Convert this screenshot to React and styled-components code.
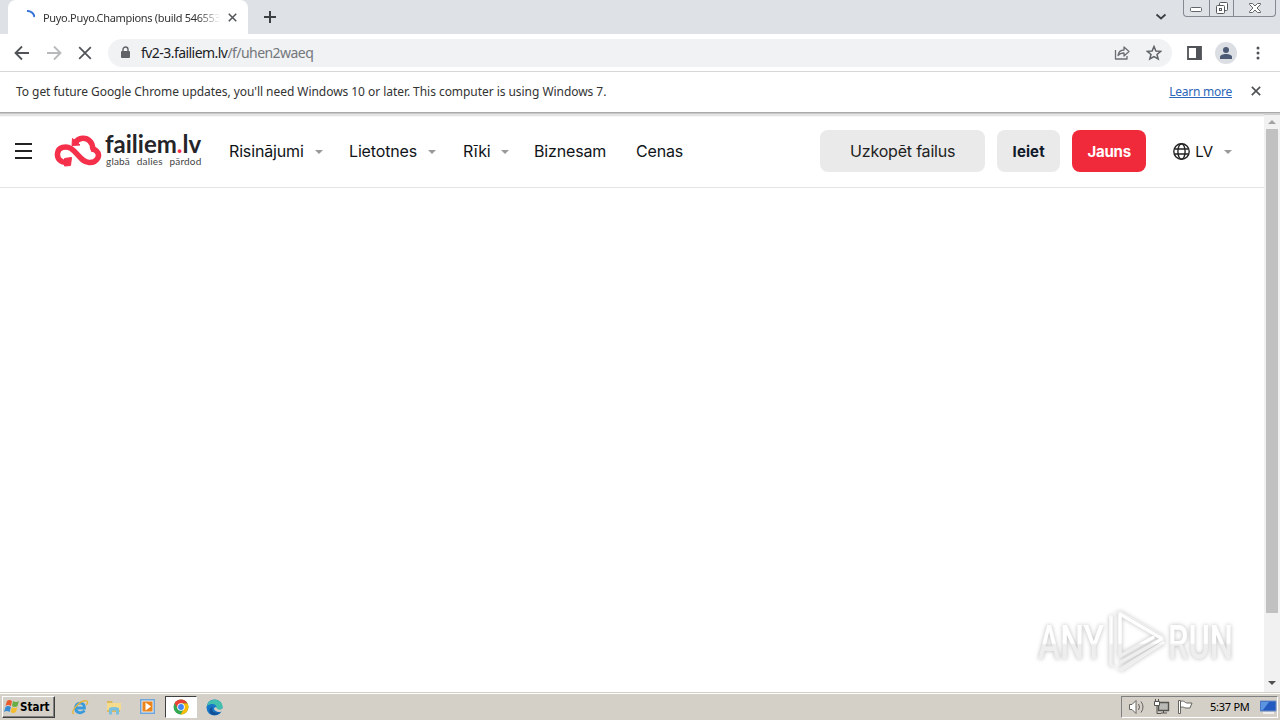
import React from 'react'
import styled, { createGlobalStyle } from 'styled-components'

const GlobalStyle = createGlobalStyle`
  * { box-sizing: border-box; }
  body { margin: 0; overflow: hidden; }
  svg { display: block; flex: none; }
`

const Screen = styled.div`
  position: relative;
  width: 1280px;
  height: 720px;
  display: flex;
  flex-direction: column;
  overflow: hidden;
  background: #fff;
  font-family: 'Noto Sans', sans-serif;
`

const Label = styled.span`
  flex: none;
  white-space: nowrap;
  color: ${props => props.$color || '#333'};
  font-size: ${props => props.$size || 12}px;
  font-weight: ${props => props.$weight || 400};
  letter-spacing: ${props => props.$spacing || 0}px;
`

const Spacer = styled.div`
  flex: 1;
`

const TabStrip = styled.div`
  height: 34px;
  flex: none;
  display: flex;
  padding-left: 8px;
  background: #dee1e6;
`

const Tab = styled.div`
  width: 240px;
  height: 34px;
  display: flex;
  align-items: center;
  padding: 0 11px;
  border-radius: 8px 8px 0 0;
  background: #fff;
`

const TabTitle = styled.div`
  width: 178px;
  margin-left: 8px;
  line-height: 18px;
  mask-image: linear-gradient(90deg, #000 155px, transparent 177px);
`

const NewTab = styled.div`
  padding: 9px 0 0 14px;
`

const TabSearch = styled.div`
  padding: 13px 16px 0 0;
`

const WindowButtons = styled.div`
  display: flex;
  width: 93px;
  height: 17px;
  margin-right: 4px;
  border: 1px solid #868991;
  border-top: 0;
  border-radius: 0 0 4px 4px;
`

const WindowButton = styled.div`
  width: ${props => props.$width}px;
  height: 16px;
  display: flex;
  align-items: center;
  justify-content: center;
  border-left: ${props => (props.$first ? 0 : '1px solid #868991')};
`

const Toolbar = styled.div`
  height: 38px;
  flex: none;
  display: flex;
  align-items: center;
  padding: 0 14px;
  border-bottom: 1px solid #d6d7d9;
`

const NavIcons = styled.div`
  display: flex;
  align-items: center;
  gap: 16px;
`

const Omnibox = styled.div`
  width: 1064px;
  height: 28px;
  display: flex;
  align-items: center;
  margin-left: 16px;
  padding: 0 10px 0 12px;
  border-radius: 14px;
  background: #f0f2f4;
`

const Url = styled.div`
  margin-left: 10px;
  line-height: 20px;
`

const Avatar = styled.div`
  width: 22px;
  height: 22px;
  margin: 0 19px 0 13px;
  display: flex;
  align-items: center;
  justify-content: center;
  border-radius: 50%;
  background: #dbdee3;
`

const InfoBar = styled.div`
  height: 40px;
  flex: none;
  display: flex;
  align-items: center;
  padding: 0 19px 2px 16px;
`

const Link = styled(Label)`
  margin-right: 19px;
  text-decoration: underline;
  text-underline-offset: 1px;
`

const Viewport = styled.div`
  height: 580px;
  flex: none;
  display: flex;
`

const Page = styled.div`
  width: 1264px;
  box-shadow: inset 0 1px #a9a9a9, inset 0 2px #c8c8c8, inset 0 4px #e4e4e4, inset 0 5px #f6f6f6;
`

const SiteHeader = styled.div`
  height: 76px;
  display: flex;
  align-items: center;
  padding: 3px 32px 0 15px;
  border-bottom: 1px solid #e3e3e3;
`

const Brand = styled.div`
  display: flex;
  margin-left: 21px;
  width: 175px;
`

const BrandText = styled.div`
  display: flex;
  flex-direction: column;
  margin-left: 3px;
  font-family: Lato, sans-serif;
`

const BrandName = styled(Label)`
  height: 21px;
  line-height: 20px;
`

const BrandDot = styled.span`
  color: #f5304b;
`

const Tagline = styled(Label)`
  height: 12px;
  margin-left: 1px;
  line-height: 12px;
  word-spacing: 4px;
`

const Menu = styled.div`
  display: flex;
  font-family: Inter, sans-serif;
`

const MenuItem = styled.div`
  width: ${props => props.$width}px;
  display: flex;
  align-items: center;
`

const Caret = styled.i`
  width: 0;
  height: 0;
  margin: 1px 0 0 ${props => props.$gap || 10}px;
  border: 4px solid transparent;
  border-top-color: #999;
  border-bottom-width: 0;
`

const Button = styled.div`
  width: ${props => props.$width}px;
  height: 42px;
  margin-right: 12px;
  display: flex;
  align-items: center;
  justify-content: center;
  border-radius: 8px;
  background: ${props => (props.$primary ? '#f02a3a' : '#eaeaea')};
  font-family: Inter, sans-serif;
`

const Language = styled.div`
  display: flex;
  align-items: center;
  gap: 5px;
  margin-left: 15px;
  font-family: Inter, sans-serif;
`

const ScrollBar = styled.div`
  width: 16px;
  display: flex;
  flex-direction: column;
  align-items: center;
  background: #f1f1f1;
  box-shadow: inset 0 1px #a9a9a9, inset 0 3px #cecece;
`

const ScrollArrow = styled.i`
  margin: ${props => (props.$up ? '8px 0 5px' : '68px 0 0')};
  border: 4px solid transparent;
  border-top: ${props => (props.$up ? 0 : '4px solid #505050')};
  border-bottom: ${props => (props.$up ? '4px solid #a3a3a3' : 0)};
`

const Thumb = styled.div`
  width: 12px;
  height: 484px;
  background: #c1c1c1;
`

const Taskbar = styled.div`
  height: 28px;
  flex: none;
  display: flex;
  align-items: center;
  padding: 1px 2px 0;
  border-top: 1px solid #d4d0c8;
  background: #d4d0c8;
  box-shadow: inset 0 1px #fff;
`

const StartButton = styled.div`
  width: 53px;
  height: 22px;
  display: flex;
  align-items: center;
  padding-left: 1px;
  border: 1px solid;
  border-color: #fff #404040 #404040 #fff;
  box-shadow: inset -1px -1px #808080;
  font-family: 'DejaVu Sans Condensed', 'DejaVu Sans', sans-serif;
`

const TaskItem = styled.div`
  width: ${props => (props.$active ? 32 : 34)}px;
  height: 22px;
  display: flex;
  align-items: center;
  justify-content: center;
  border: ${props => (props.$active ? '1px solid' : 0)};
  border-color: #404040 #fff #fff #404040;
  background: ${props => (props.$active ? '#fff' : 'transparent')};
`

const TaskItems = styled.div`
  display: flex;
  margin-left: 8px;
`

const Tray = styled.div`
  width: 157px;
  height: 22px;
  display: flex;
  align-items: center;
  padding-left: 6px;
  gap: 7px;
  border: 1px solid;
  border-color: #808080 #fff #fff #808080;
`

const Clock = styled(Label)`
  width: 43px;
  margin-left: 9px;
  line-height: 16px;
`

const Watermark = styled.div`
  position: absolute;
  left: 1034px;
  top: 605px;
`

const Cross = ({ size, color = '#505357', width = 2 }) => (
  <svg width={size} height={size} viewBox="0 0 12 12" stroke={color} strokeWidth={width}>
    <path d="M1 1 11 11M11 1 1 11" />
  </svg>
)

const Arrow = ({ color, flip }) => (
  <svg width="16" height="16" viewBox="0 0 16 16" fill="none" stroke={color} strokeWidth="1.8">
    <path d={flip ? 'M1 8H14M8 1.500 14.500 8 8 14.500' : 'M15 8H2M8 1.500 1.500 8 8 14.500'} />
  </svg>
)

const WindowsControls = () => (
  <WindowButtons>
    <WindowButton $width={25} $first>
      <svg width="14" height="6" fill="#fff" stroke="#62656b" style={{ marginTop: 4 }}><rect x="1.5" y=".5" width="11" height="4" rx="1" /></svg>
    </WindowButton>
    <WindowButton $width={25}>
      <svg width="14" height="14" fill="#fff" stroke="#55585e">
        <rect x="4.5" y="1.5" width="8" height="8" rx="1" />
        <rect x="1.5" y="4.5" width="8" height="8" rx="1" />
        <rect x="4.5" y="7.5" width="2" height="2" />
      </svg>
    </WindowButton>
    <WindowButton $width={42}>
      <svg width="14" height="12" fill="#fff" stroke="#62656b">
        <path d="M1.500 1.500H4.500L7 4 9.500 1.500H12.500V2.500L9 6 12.500 9.500V10.500H9.500L7 8 4.500 10.500H1.500V9.500L5 6 1.500 2.500Z" />
      </svg>
    </WindowButton>
  </WindowButtons>
)

const CloudLogo = () => (
  <svg width="48" height="34" viewBox="0 0 48 34" fill="none" stroke="#f5304b" strokeWidth="5.5">
    <path d="M14 28.500C7 29 3 25 3.500 19.500C4 13 12 11.500 17 14.500C24 19 27 28 35 28.500C43 29 47 21.500 42.500 17C40.500 15 38.500 14.800 36.500 15.500M38.800 15.500C39 8 34 4 28.500 4.300C25 4.500 22.500 6.500 21 9" />
    <path d="M10.500 24.500 17.500 23.500 16.500 31.500 10.500 32ZM18.500 4.500 18 11.500 26 11Z" fill="#f5304b" strokeWidth="1" />
  </svg>
)

const WatermarkLogo = () => (
  <svg width="214" height="74" viewBox="0 0 214 74" style={{ filter: 'drop-shadow(0 0 2px #bbb)' }}>
    <defs>
      <linearGradient id="fade" gradientUnits="userSpaceOnUse" x1="0" y1="10" x2="0" y2="66">
        <stop offset="0.5" stopColor="#fff" />
        <stop offset="0.53" stopColor="#eee" />
      </linearGradient>
    </defs>
    <g fill="none" stroke="url(#fade)" strokeWidth="3.5" strokeLinejoin="round" strokeLinecap="round">
      <path d="M77 12V60M86 47V9L127 33" />
      <path d="M86 47V51L119 32.500M87 57 128 34" />
      <path d="M87 64 129 38" />
    </g>
    <path d="M76 13 81 9 86 6 129 31V38L88 66 76 59Z" fill="none" stroke="#f5f5f5" />
    <g fill="url(#fade)" fontFamily="Roboto, sans-serif" fontSize="48" fontWeight="500">
      <text x="4" y="54" textLength="66" lengthAdjust="spacingAndGlyphs">ANY</text>
      <text x="134" y="54" textLength="65" lengthAdjust="spacingAndGlyphs">RUN</text>
    </g>
  </svg>
)

const menu = [
  { text: 'Risinājumi', width: 120, gap: 11, caret: true },
  { text: 'Lietotnes', width: 114, gap: 11, caret: true },
  { text: 'Rīki', width: 71, gap: 10, caret: true },
  { text: 'Biznesam', width: 102 },
  { text: 'Cenas', width: 50 }
]

const App = () => (
  <Screen>
    <GlobalStyle />
    <TabStrip>
      <Tab>
        <svg width="16" height="16" fill="none" stroke="#3573d9" strokeWidth="2"><path d="M8 2A7 7 0 0 1 15.500 8" /></svg>
        <TabTitle>
          <Label $size={11} $spacing={-0.32}>Puyo.Puyo.Champions (build 546553</Label>
        </TabTitle>
        <Spacer />
        <Cross size={9} />
      </Tab>
      <NewTab><svg width="16" height="16" stroke="#3c4043" strokeWidth="2"><path d="M8 2V14M2 8H14" /></svg></NewTab>
      <Spacer />
      <TabSearch><svg width="12" height="8" fill="none" stroke="#3c4043" strokeWidth="1.8"><path d="M1.500 1.500 6 5.500 10.500 1.500" /></svg></TabSearch>
      <WindowsControls />
    </TabStrip>
    <Toolbar>
      <NavIcons>
        <Arrow color="#505357" />
        <Arrow color="#b7b9bb" flip />
        <Cross size={14} width={1.5} />
      </NavIcons>
      <Omnibox>
        <svg width="11" height="14" fill="#5f6368"><rect x="1" y="5" width="9" height="7" rx="1" /><path d="M3 6V3.500a2.500 2.500 0 0 1 5 0V6" fill="none" stroke="#5f6368" strokeWidth="1.4" /></svg>
        <Url>
          <Label $size={14} $spacing={-0.55} $color="#202124">fv2-3.failiem.lv</Label>
          <Label $size={14} $spacing={-0.55} $color="#74777b">/f/uhen2waeq</Label>
        </Url>
        <Spacer />
        <svg width="17" height="16" fill="none" stroke="#6b6e72" strokeWidth="1.3" strokeLinejoin="round">
          <path d="M1.500 5V14H13V11M4 10.500C4.500 7 7 5 10 5V2L15 6.500 10 11V8C7.500 8 5.500 8.500 4 10.500Z" />
        </svg>
        <svg width="16" height="16" style={{ marginLeft: 15 }} fill="none" stroke="#5f6368" strokeWidth="1.5"><path d="M8 1.500 9.900 6 14.700 6.300 11 9.400 12.200 14 8 11.500 3.800 14 5 9.400 1.300 6.300 6.100 6Z" /></svg>
      </Omnibox>
      <svg width="15" height="14" style={{ marginLeft: 15 }}><path d="M1 1H14V13H1Z" fill="none" stroke="#505357" strokeWidth="1.8" /><path d="M9 1H14V13H9Z" fill="#505357" /></svg>
      <Avatar><svg width="14" height="14" fill="#4c5a76"><circle cx="7" cy="4" r="3" /><path d="M1 13V11C1 7 13 7 13 11V13Z" /></svg></Avatar>
      <svg width="4" height="16" fill="#505357"><circle cx="2" cy="3" r="1.5" /><circle cx="2" cy="8" r="1.5" /><circle cx="2" cy="13" r="1.5" /></svg>
    </Toolbar>
    <InfoBar>
      <Label $spacing={-0.05}>To get future Google Chrome updates, you'll need Windows 10 or later. This computer is using Windows 7.</Label>
      <Spacer />
      <Link $color="#2b66b8" $spacing={-0.25}>Learn more</Link>
      <Cross size={10} />
    </InfoBar>
    <Viewport>
      <Page>
        <SiteHeader>
          <svg width="18" height="16" stroke="#222" strokeWidth="2"><path d="M0 1H17M0 8H17M0 15H17" /></svg>
          <Brand>
            <CloudLogo />
            <BrandText>
              <BrandName $size={24} $weight={700} $color="#242429">failiem<BrandDot>.</BrandDot>lv</BrandName>
              <Tagline $size={10} $spacing={0.18} $color="#444">glabā dalies pārdod</Tagline>
            </BrandText>
          </Brand>
          <Menu>
            {menu.map(item => (
              <MenuItem key={item.text} $width={item.width}>
                <Label $size={16} $spacing={-0.15} $color="#101418">{item.text}</Label>
                {item.caret && <Caret $gap={item.gap} />}
              </MenuItem>
            ))}
          </Menu>
          <Spacer />
          <Button $width={165}><Label $size={16} $spacing={-0.2} $color="#222">Uzkopēt failus</Label></Button>
          <Button $width={63}><Label $size={15} $weight={700} $spacing={0.1} $color="#101a28">Ieiet</Label></Button>
          <Button $width={74} $primary><Label $size={15} $weight={700} $spacing={-0.2} $color="#fff">Jauns</Label></Button>
          <Language>
            <svg width="17" height="17" viewBox="0 0 17 17" fill="none" stroke="#222" strokeWidth="1.4"><circle cx="8.5" cy="8.5" r="7.7" /><ellipse cx="8.5" cy="8.5" rx="3.6" ry="7.7" /><path d="M1.500 6H15.500M1.500 11H15.500" /></svg>
            <Label $size={15} $color="#111">LV</Label>
            <Caret $gap={6} />
          </Language>
        </SiteHeader>
      </Page>
      <ScrollBar><ScrollArrow $up /><Thumb /><ScrollArrow /></ScrollBar>
    </Viewport>
    <Taskbar>
      <StartButton>
        <svg width="16" height="16" viewBox="0 0 16 16">
          <path d="M3 2Q5 0 8 2L7 7Q4 5 1.500 7Z" fill="#e95b2d" /><path d="M9 2Q12 4 15 2L13.500 7Q11 9 8 7Z" fill="#68ad45" />
          <path d="M1.500 8Q4 6 7 8L5.500 13Q3 11 0 13Z" fill="#378bd3" /><path d="M8 8Q11 10 13.500 8L12 13Q9 15 6.500 13Z" fill="#f3bd32" />
        </svg>
        <Label $size={11.5} $weight={700} $color="#000">Start</Label>
      </StartButton>
      <TaskItems>
        <TaskItem>
          <svg width="18" height="18" viewBox="0 0 18 18" fill="none"><path d="M4.500 10H13.500C14 3.500 4.500 3.500 4.500 10C4.500 15.500 11 16 13.500 12.500" stroke="#3a9bdc" strokeWidth="2.8" /><path d="M3 16C-2 14 10 1 16 3C17.500 4 16 6 15.500 7" stroke="#e5b43a" strokeWidth="1.3" /></svg>
        </TaskItem>
        <TaskItem>
          <svg width="18" height="18" viewBox="0 0 18 18"><path d="M2 3H7L8 5H15V14H2Z" fill="#dcb95a" /><path d="M2 5H16V12H2Z" fill="#f4dc8c" /><path d="M4 16.500V10Q9 8 14 10V16.500H11V12.500H7V16.500Z" fill="#79bfdf" /></svg>
        </TaskItem>
        <TaskItem>
          <svg width="18" height="18" viewBox="0 0 18 18"><path d="M1 1H16V16H1Z" fill="#6ea6dc" /><path d="M2.500 2.500H14.500V14.500H2.500Z" fill="#e8edf3" /><path d="M3.500 3.500H13.500V13.500H3.500Z" fill="#ec8519" /><path d="M6.500 4.500 12 8.500 6.500 12.500Z" fill="#fff" /></svg>
        </TaskItem>
        <TaskItem $active>
          <svg width="16" height="16" viewBox="0 0 16 16"><circle cx="8" cy="8" r="7.5" fill="#35a853" /><path d="M1.500 4.200A7.500 7.500 0 0 1 14.500 4.500H8L4.800 9.500Z" fill="#e94235" /><path d="M14.500 4.500A7.500 7.500 0 0 1 7.500 15.500L11.200 9.500 8 4.500Z" fill="#fbbc05" /><circle cx="8" cy="8" r="3.8" fill="#fff" /><circle cx="8" cy="8" r="2.9" fill="#4285f4" /></svg>
        </TaskItem>
        <TaskItem>
          <svg width="17" height="17" viewBox="0 0 17 17"><circle cx="8.5" cy="8.5" r="8" fill="#1776c5" /><path d="M1 7C2-2 17-1 16.500 8C16 12 10 12 10 10C12 6 7 3 1 7Z" fill="#43bfae" /><path d="M7 8C4 12 9 15 14 13C12 16 7 17 5 15C2 12 4 8 7 8Z" fill="#124f95" /><path d="M10 8C12 12 15 11 16.500 9L17 12 14 13C10 13 8 11 8 9Z" fill="#d4d0c8" /></svg>
        </TaskItem>
      </TaskItems>
      <Spacer />
      <Tray>
        <svg width="18" height="16" fill="#fff" stroke="#66645f"><path d="M1.500 5.500H4L8 1.500V14.500L4 10.500H1.500Z" /><path d="M10.500 5Q12.500 8 10.500 11M13 2.500Q17 8 13 13.500" fill="none" /></svg>
        <svg width="17" height="16" fill="#fff" stroke="#55534f"><path d="M5.500 3.500H15.500V11.500H5.500Z" fill="#b9b9b6" strokeWidth="1.4" /><path d="M8 14H14M10.500 12V14" /><path d="M1.500 2.500H6.500V6.500H1.500ZM2.500 0V2M5.500 0V2" /><path d="M4 7V14.500H8" fill="none" /></svg>
        <svg width="17" height="16" fill="#fff" stroke="#66645f"><path d="M1.500 1.500H3.500V14.500H1.500ZM3.500 2.500C7 1 8 4 10 4H15L13 9H9C7 9 6 7 3.500 8.500Z" /></svg>
        <Clock $size={11} $spacing={-0.25} $color="#000">5:37 PM</Clock>
        <svg width="17" height="15"><path d="M0 1H16V11H0Z" fill="#245ac0" stroke="#6e90c7" /><path d="M1 2H9L3 10H1Z" fill="#5b94e1" /><path d="M3 12H14V14H3Z" fill="#eee" /></svg>
      </Tray>
    </Taskbar>
    <Watermark><WatermarkLogo /></Watermark>
  </Screen>
)

export default App
